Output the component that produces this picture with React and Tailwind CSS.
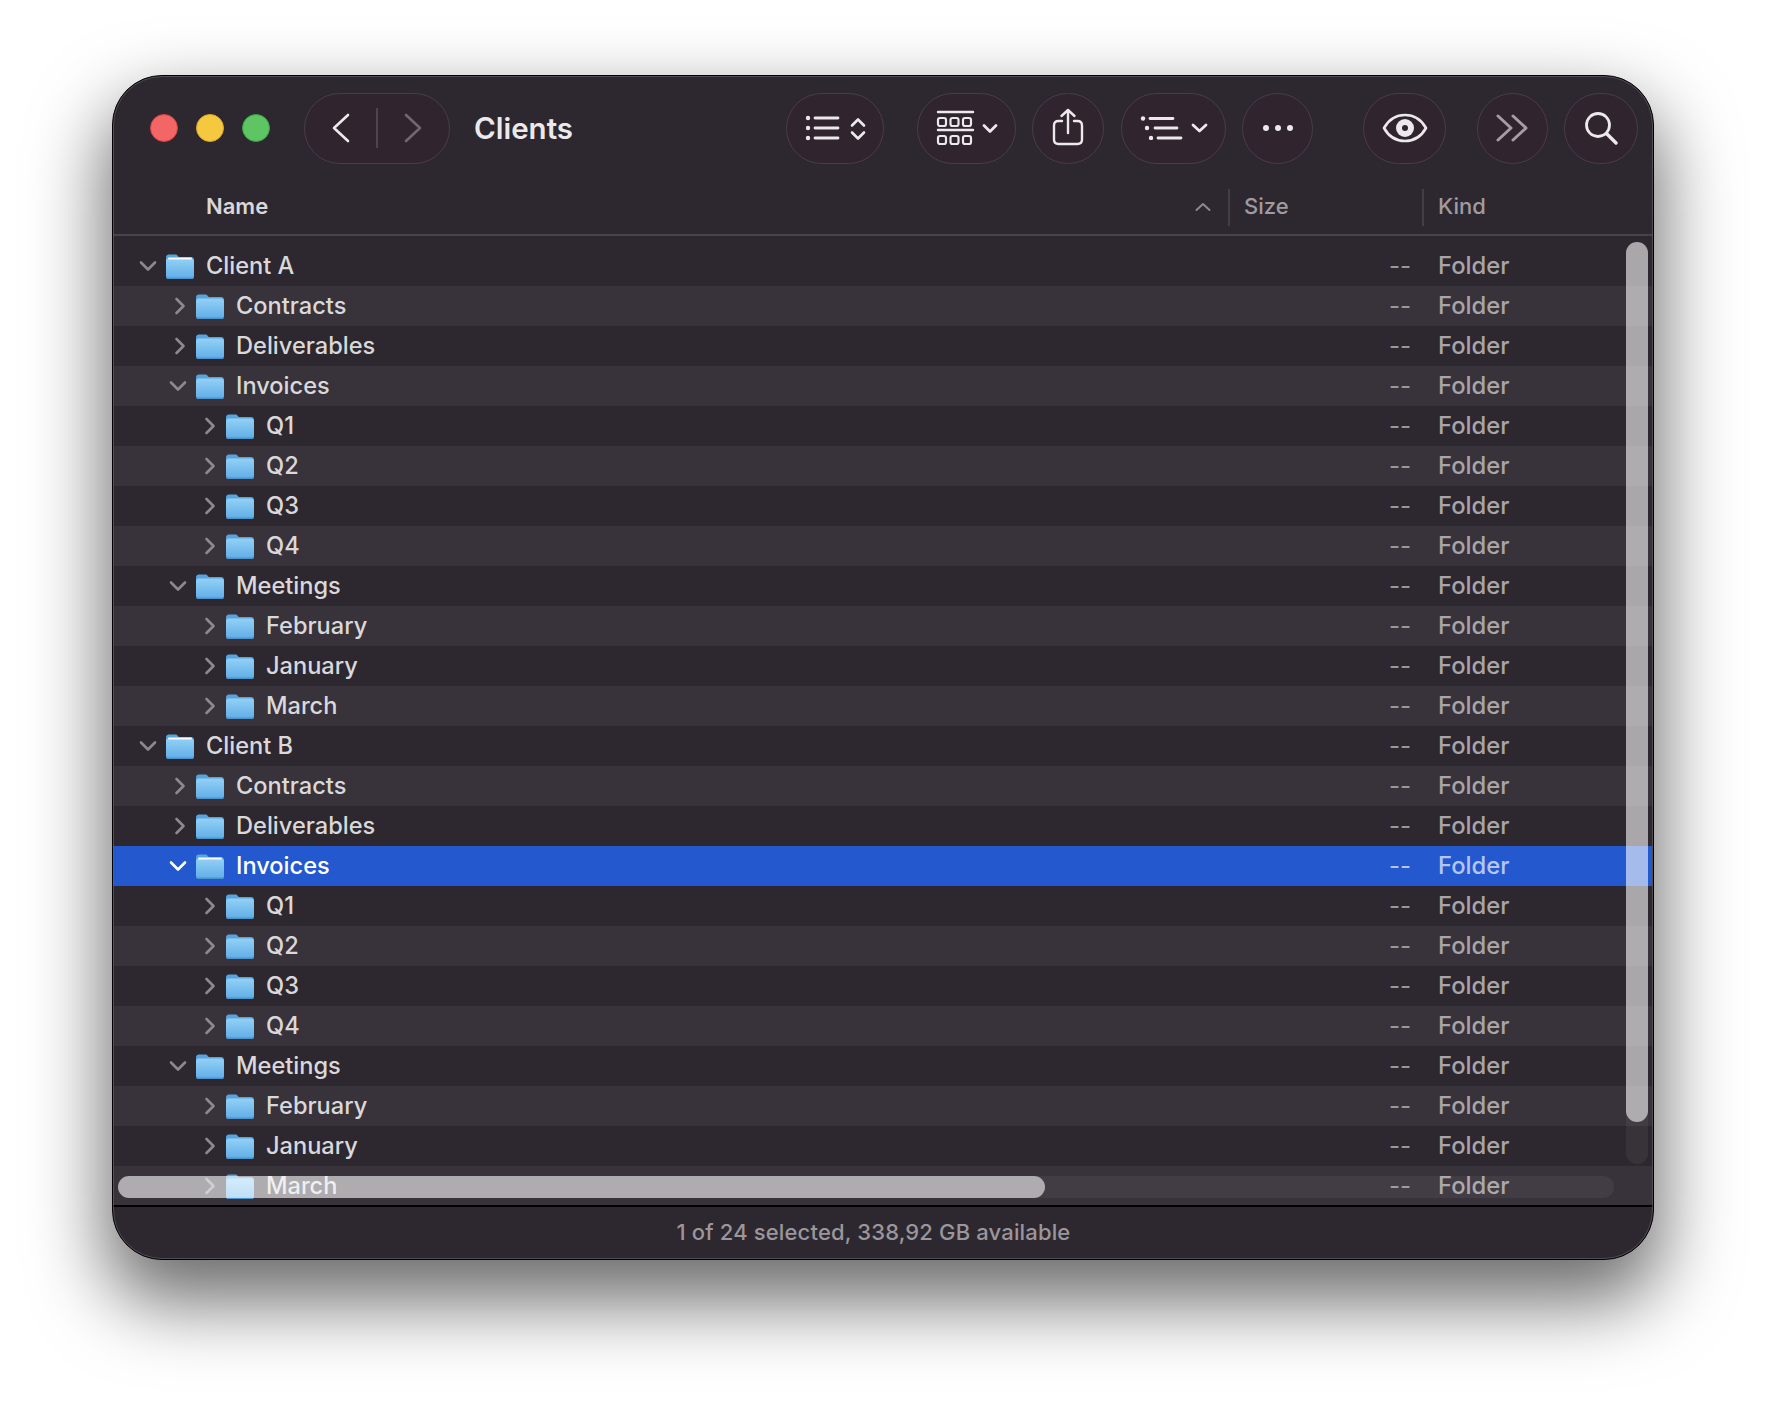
import React from "react";

const tree = [
  [0, "Client A", true],
  [1, "Contracts"],
  [1, "Deliverables"],
  [1, "Invoices", true],
  [2, "Q1"],
  [2, "Q2"],
  [2, "Q3"],
  [2, "Q4"],
  [1, "Meetings", true],
  [2, "February"],
  [2, "January"],
  [2, "March"],
  [0, "Client B", true],
  [1, "Contracts"],
  [1, "Deliverables"],
  [1, "Invoices", true, true],
  [2, "Q1"],
  [2, "Q2"],
  [2, "Q3"],
  [2, "Q4"],
  [1, "Meetings", true],
  [2, "February"],
  [2, "January"],
  [2, "March"],
];

function Folder({ stripe, id }) {
  return (
    <svg width="28" height="25" viewBox="0 0 28 25" className="shrink-0">
      <defs>
        <linearGradient id={`f${id}`} x1="0" y1="0" x2="0" y2="1">
          <stop offset="0" stopColor="#93d0f6" />
          <stop offset="1" stopColor="#5fade6" />
        </linearGradient>
      </defs>
      <path d="M0 3.5C0 1.6 1.2.5 3 .5h6c1.4 0 2 .5 2.8 1.4l1 1.1H25c1.9 0 3 1.1 3 3v3H0z" fill="#56a5de" />
      <path d="M0 7.5C0 5.6 1.2 4.5 3 4.5h22c1.9 0 3 1.1 3 3V22c0 1.9-1.1 3-3 3H3c-1.8 0-3-1.1-3-3z" fill={`url(#f${id})`} />
      <rect x="0.5" y="23.6" width="27" height="1.4" rx="0.7" fill="#4a93cf" />
      {stripe && <rect x="2" y="3.6" width="24" height="2" rx="1" fill="#ffffff" fillOpacity="0.92" />}
    </svg>
  );
}

function Row({ level, name, open, selected, index }) {
  const stripeBg = selected
    ? "bg-[#2358ce]"
    : index % 2 === 1
    ? "bg-[#38333a]"
    : "bg-transparent";
  const pad = level === 0 ? "pl-[28px]" : level === 1 ? "pl-[58px]" : "pl-[88px]";
  return (
    <div className={`flex h-[40px] shrink-0 items-center mr-[1px] ${stripeBg} ${pad}`}>
      <div className="flex w-[25px] shrink-0 items-center justify-start">
        {open ? (
          <svg width="18" height="12" viewBox="0 0 18 12" fill="none" stroke={selected ? "#ffffff" : "#8d888e"} strokeWidth="2.6" strokeLinecap="round" strokeLinejoin="round" className="-ml-[2px] shrink-0">
            <path d="M2 2.5l7 7 7-7" />
          </svg>
        ) : (
          <svg width="12" height="18" viewBox="0 0 12 18" fill="none" stroke="#8d888e" strokeWidth="2.6" strokeLinecap="round" strokeLinejoin="round" className="ml-[3px] shrink-0">
            <path d="M2.5 2l7 7-7 7" />
          </svg>
        )}
      </div>
      <Folder stripe={level === 0 || selected} id={index} />
      <div className={`mb-[1px] ml-[12px] flex-1 text-[23.6px] font-[450] leading-none ${selected ? "text-white" : "text-[#dad8da]"}`}>{name}</div>
      <div className={`mb-[1px] w-[24px] shrink-0 text-[24px] leading-none ${selected ? "text-[#b4c6f0]" : "text-[#9b969b]"}`}>--</div>
      <div className={`mb-[1px] ml-[25px] w-[214px] shrink-0 text-[23.8px] font-[450] leading-none ${selected ? "text-[#b4c6f0]" : "text-[#a8a4a8]"}`}>Folder</div>
    </div>
  );
}

function Pill({ w, ml, children }) {
  return (
    <div
      className={`flex h-[71px] shrink-0 items-center justify-center rounded-full border-[1.5px] border-[#4a3b50] bg-[#30242e] ${w} ${ml}`}
    >
      {children}
    </div>
  );
}

const stroke = {
  fill: "none",
  stroke: "#ebe9eb",
  strokeWidth: 2.6,
  strokeLinecap: "round",
  strokeLinejoin: "round",
};

export default function App() {
  return (
    <div className="min-h-[1408px] bg-white pl-[112px] pt-[75px] font-['Inter',sans-serif]">
      <div className="relative flex h-[1185px] w-[1542px] flex-col overflow-hidden rounded-[50px] border border-black bg-[#2d282f] shadow-[0_36px_76px_6px_rgba(0,0,0,0.58)]">
        <div className="pointer-events-none absolute inset-0 z-20 rounded-[49px] border border-[#6b686c]/60" />
        {/* title bar */}
        <div className="flex h-[104px] shrink-0 items-center pl-[37px]">
          <div className="h-[28px] w-[28px] rounded-full border border-[#d9403f] bg-[#f26666]" />
          <div className="ml-[18px] h-[28px] w-[28px] rounded-full border border-[#dba92a] bg-[#f5c93f]" />
          <div className="ml-[18px] h-[28px] w-[28px] rounded-full border border-[#3ba343] bg-[#5fc463]" />
          <div className="ml-[34px] flex h-[71px] w-[146px] shrink-0 items-center rounded-full border-[1.5px] border-[#4a3b50] bg-[#30242e]">
            <div className="flex flex-1 items-center justify-center">
              <svg width="20" height="32" viewBox="0 0 20 32" {...stroke}>
                <path d="M17 3L3 16l14 13" />
              </svg>
            </div>
            <div className="-ml-[1px] h-[40px] w-[2px] bg-[#4d4650]" />
            <div className="flex flex-1 items-center justify-center">
              <svg width="20" height="32" viewBox="0 0 20 32" {...stroke} stroke="#6e6970">
                <path d="M3 3l14 13L3 29" />
              </svg>
            </div>
          </div>
          <div className="ml-[24px] mt-[1px] text-[29.5px] font-semibold leading-none text-[#ebe9eb]">Clients</div>
          <div className="flex-1" />
          <Pill w="w-[98px]" ml="ml-0">
            <svg width="62" height="34" viewBox="0 0 62 34" {...stroke} strokeWidth="2.8">
              <circle cx="4" cy="7" r="2.2" fill="#ebe9eb" stroke="none" />
              <circle cx="4" cy="17" r="2.2" fill="#ebe9eb" stroke="none" />
              <circle cx="4" cy="27" r="2.2" fill="#ebe9eb" stroke="none" />
              <path d="M11 7h23M11 17h23M11 27h23" />
              <path d="M48 14.500l6-6 6 6M48 21.500l6 6 6-6" strokeWidth="2.6" />
            </svg>
          </Pill>
          <Pill w="w-[99px]" ml="ml-[33px]">
            <svg width="62" height="36" viewBox="0 0 62 36" {...stroke} strokeWidth="2.2">
              <path d="M2 2h35M2 20h35" strokeWidth="2.4" />
              <rect x="2" y="8" width="8" height="8" rx="2" />
              <rect x="14.500" y="8" width="8" height="8" rx="2" />
              <rect x="27" y="8" width="8" height="8" rx="2" />
              <rect x="2" y="26" width="8" height="8" rx="2" />
              <rect x="14.500" y="26" width="8" height="8" rx="2" />
              <rect x="27" y="26" width="8" height="8" rx="2" />
              <path d="M48 15.500l6 6 6-6" strokeWidth="2.8" />
            </svg>
          </Pill>
          <Pill w="w-[72px]" ml="ml-[16px]">
            <svg width="32" height="38" viewBox="0 0 32 38" {...stroke} strokeWidth="2.4" className="-mt-[2px]">
              <path d="M10 13H6.500C3.500 13 2 14.500 2 17.500V31.500C2 34.500 3.500 36 6.500 36h19c3 0 4.500-1.500 4.500-4.500V17.500C30 14.500 28.500 13 25.500 13H22" />
              <path d="M16 25V2M9.500 8L16 2l6.500 6" />
            </svg>
          </Pill>
          <Pill w="w-[105px]" ml="ml-[17px]">
            <svg width="68" height="24" viewBox="0 0 68 24" {...stroke} strokeWidth="2.8">
              <circle cx="3" cy="2.500" r="2.200" fill="#ebe9eb" stroke="none" />
              <circle cx="7" cy="12" r="2.200" fill="#ebe9eb" stroke="none" />
              <circle cx="11" cy="22" r="2.200" fill="#ebe9eb" stroke="none" />
              <path d="M10 2.500h23M15 12h22M18 22h23" />
              <path d="M53 9l6.500 6 6.500-6" />
            </svg>
          </Pill>
          <Pill w="w-[71px]" ml="ml-[16px]">
            <svg width="32" height="8" viewBox="0 0 32 8" fill="#ebe9eb">
              <circle cx="4" cy="4" r="3" />
              <circle cx="16" cy="4" r="3" />
              <circle cx="28" cy="4" r="3" />
            </svg>
          </Pill>
          <Pill w="w-[83px]" ml="ml-[50px]">
            <svg width="46" height="30" viewBox="0 0 46 30" className="-mt-[1px]">
              <path d="M2 15C7 6 14 2 23 2s16 4 21 13c-5 9-12 13-21 13S7 24 2 15z" fill="none" stroke="#ebe9eb" strokeWidth="2.6" strokeLinejoin="round" />
              <circle cx="23" cy="15" r="9" fill="#ebe9eb" />
              <circle cx="23" cy="15" r="3" fill="#30242e" />
            </svg>
          </Pill>
          <Pill w="w-[71px]" ml="ml-[31px]">
            <svg width="32" height="28" viewBox="0 0 32 28" {...stroke} stroke="#a39ea3" strokeWidth="3" className="-ml-[2px]">
              <path d="M2 2l13 12L2 26M17 2l13 12-13 12" />
            </svg>
          </Pill>
          <Pill w="w-[74px]" ml="ml-[16px]">
            <svg width="34" height="34" viewBox="0 0 34 34" {...stroke} strokeWidth="2.8">
              <circle cx="14" cy="14" r="11.500" />
              <path d="M23 23l9 9" strokeWidth="3.4" />
            </svg>
          </Pill>
          <div className="w-[15px] shrink-0" />
        </div>
        {/* column headers */}
        <div className="flex h-[56px] shrink-0 items-center border-b-2 border-[#48434a] text-[22px] leading-none text-[#a09ba0]">
          <div className="mb-[2px] ml-[93px] flex-1 font-semibold text-[#d9d7d9]">Name</div>
          <svg width="16" height="10" viewBox="0 0 16 10" fill="none" stroke="#8d888e" strokeWidth="2" strokeLinecap="round" strokeLinejoin="round">
            <path d="M1.500 8L8 2l6.500 6" />
          </svg>
          <div className="ml-[17px] h-[37px] w-[2px] bg-[#433e45]" />
          <div className="mb-[2px] ml-[14px] w-[178px] font-[450]">Size</div>
          <div className="h-[37px] w-[2px] bg-[#433e45]" />
          <div className="mb-[2px] ml-[14px] w-[215px] font-[450]">Kind</div>
        </div>
        {/* file list */}
        <div className="relative flex flex-1 flex-col overflow-hidden pt-[10px]">
          {tree.map(([level, name, open, selected], i) => (
            <Row key={i} level={level} name={name} open={open} selected={selected} index={i} />
          ))}
          {/* vertical scroller */}
          <div className="absolute bottom-[41px] right-[5px] top-[6px] w-[22px] rounded-full bg-white/5">
            <div className="h-[880px] w-[22px] rounded-full bg-white/[0.57]" />
          </div>
          {/* horizontal scroller */}
          <div className="absolute bottom-[7px] left-[5px] h-[22px] w-[1496px] rounded-full bg-white/5">
            <div className="h-[22px] w-[927px] rounded-full bg-white/[0.57]" />
          </div>
        </div>
        {/* status bar */}
        <div className="flex h-[54px] shrink-0 items-center justify-center border-t-2 border-black pb-[2px] pr-[19px] text-[22px] font-[450] leading-none tracking-[0.15px] text-[#9b969b]">
          1 of 24 selected, 338,92 GB available
        </div>
      </div>
    </div>
  );
}
